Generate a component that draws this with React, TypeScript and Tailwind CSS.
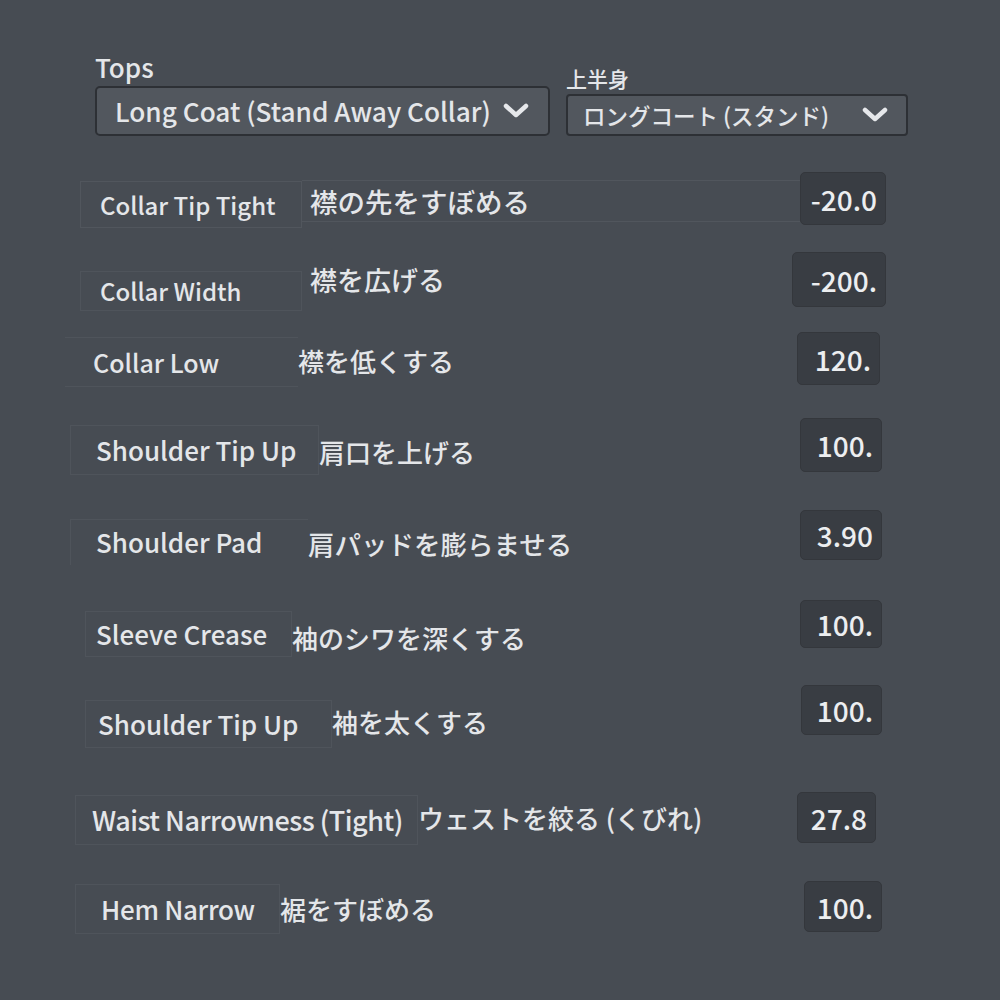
import React from 'react';

type Row = {
  en: string;
  jp: string;
  value: string;
  row: string;
  label: string;
  jpCls: string;
  box: string;
};

const rows: Row[] = [
  {
    en: 'Collar Tip Tight',
    jp: '襟の先をすぼめる',
    value: '-20.0',
    row: 'mt-[36px] h-[53px]',
    label: 'ml-[80px] w-[222px] pl-[19px] mt-[11px] text-[24px] border border-[#51565d] h-[47px] leading-[45px]',
    jpCls: 'mt-[5px] text-[27.5px] border-t border-b border-[#51565d] pl-[8px]',
    box: 'w-[86px] mr-[114px]',
  },
  {
    en: 'Collar Width',
    jp: '襟を広げる',
    value: '-200.',
    row: 'mt-[27px] h-[55px]',
    label: 'ml-[80px] w-[222px] pl-[19px] mt-[23px] text-[24px] border border-[#4f545b] h-[40px] leading-[38px]',
    jpCls: 'text-[27px] pl-[8px]',
    box: 'w-[94px] mr-[114px]',
  },
  {
    en: 'Collar Low',
    jp: '襟を低くする',
    value: '120.',
    row: 'mt-[25px] h-[53px]',
    label: 'ml-[65px] w-[233px] pl-[28px] mt-[7px] text-[25px] border-t border-b border-[#4f545b] h-[50px] leading-[48px]',
    jpCls: 'mt-[5px] text-[26px]',
    box: 'w-[83px] mr-[120px]',
  },
  {
    en: 'Shoulder Tip Up',
    jp: '肩口を上げる',
    value: '100.',
    row: 'mt-[33px] h-[54px]',
    label: 'ml-[70px] w-[249px] pl-[25px] mt-[10px] text-[26px] border border-[#4f545b] h-[50px] leading-[48px]',
    jpCls: 'mt-[14px] text-[26px]',
    box: 'w-[82px] mr-[118px]',
  },
  {
    en: 'Shoulder Pad',
    jp: '肩パッドを膨らませる',
    value: '3.90',
    row: 'mt-[38px] h-[50px]',
    label: 'ml-[70px] w-[238px] pl-[25px] mt-[14px] text-[26px] border-t border-l border-[#4f545b] h-[46px] leading-[44px]',
    jpCls: 'mt-[18px] text-[26.5px]',
    box: 'w-[82px] mr-[118px]',
  },
  {
    en: 'Sleeve Crease',
    jp: '袖のシワを深くする',
    value: '100.',
    row: 'mt-[40px] h-[48px]',
    label: 'ml-[85px] w-[207px] pl-[10px] mt-[20px] text-[26px] border border-[#4f545b] h-[46px] leading-[44px]',
    jpCls: 'mt-[28px] text-[26px]',
    box: 'w-[82px] mr-[118px]',
  },
  {
    en: 'Shoulder Tip Up',
    jp: '袖を太くする',
    value: '100.',
    row: 'mt-[37px] h-[50px]',
    label: 'ml-[85px] w-[247px] pl-[12px] mt-[28px] text-[26px] border border-[#4f545b] h-[48px] leading-[46px]',
    jpCls: 'mt-[24px] text-[26px]',
    box: 'w-[81px] mr-[118px]',
  },
  {
    en: 'Waist Narrowness (Tight)',
    jp: 'ウェストを絞る (くびれ)',
    value: '27.8',
    row: 'mt-[57px] h-[51px]',
    label: 'ml-[75px] w-[343px] pl-[16px] mt-[5px] text-[27px] tracking-[-0.5px] border border-[#4f545b] h-[50px] leading-[48px]',
    jpCls: 'text-[26px]',
    box: 'w-[79px] mr-[124px]',
  },
  {
    en: 'Hem Narrow',
    jp: '裾をすぼめる',
    value: '100.',
    row: 'mt-[38px] h-[51px]',
    label: 'ml-[75px] w-[205px] pl-[25px] mt-[5px] text-[26px] tracking-[-0.3px] border border-[#4f545b] h-[50px] leading-[48px]',
    jpCls: 'mt-[5px] text-[26px]',
    box: 'w-[78px] mr-[118px]',
  },
];

function Chevron({ className }: { className: string }) {
  return (
    <svg viewBox="0 0 26 16" className={className} fill="none">
      <polyline
        points="3,3 13,12 23,3"
        stroke="#e6e8eb"
        strokeWidth="4.5"
        strokeLinecap="round"
        strokeLinejoin="round"
      />
    </svg>
  );
}

export default function App() {
  return (
    <div
      className="w-[1000px] h-[1000px] overflow-hidden bg-[#474c53] text-[#e4e6e9] font-medium"
      style={{ fontFamily: '"Noto Sans CJK JP", "Noto Sans", sans-serif' }}
    >
      <div className="flex items-end pt-[50px]">
        <div className="ml-[95px] w-[455px]">
          <div className="text-[26px] leading-[34px]">Tops</div>
          <div className="mt-[2px] h-[50px] flex items-center rounded-[5px] border-2 border-[#2d3035] bg-[#52575e] pl-[18px]">
            <span className="text-[26.2px] leading-none">Long Coat (Stand Away Collar)</span>
            <Chevron className="ml-[12px] w-[26px] h-[16px]" />
          </div>
        </div>
        <div className="ml-[16px] w-[342px]">
          <div className="text-[21px] leading-[26px]">上半身</div>
          <div className="mt-[3px] h-[42px] flex items-center rounded-[4px] border-2 border-[#2d3035] bg-[#52575e] pl-[15px] pr-[18px]">
            <span className="text-[22.5px] leading-none">ロングコート (スタンド)</span>
            <Chevron className="ml-auto w-[26px] h-[16px]" />
          </div>
        </div>
      </div>

      {rows.map((r, i) => (
        <div key={i} className={`flex items-center ${r.row}`}>
          <span className={`shrink-0 whitespace-nowrap ${r.label}`}>{r.en}</span>
          <span className={`flex-1 whitespace-nowrap leading-[40px] ${r.jpCls}`}>{r.jp}</span>
          <div
            className={`h-full shrink-0 flex items-center justify-end rounded-[5px] border border-[#34373c] bg-[#393d43] pr-[8px] text-[28px] text-[#eceef0] ${r.box}`}
          >
            {r.value}
          </div>
        </div>
      ))}
    </div>
  );
}
